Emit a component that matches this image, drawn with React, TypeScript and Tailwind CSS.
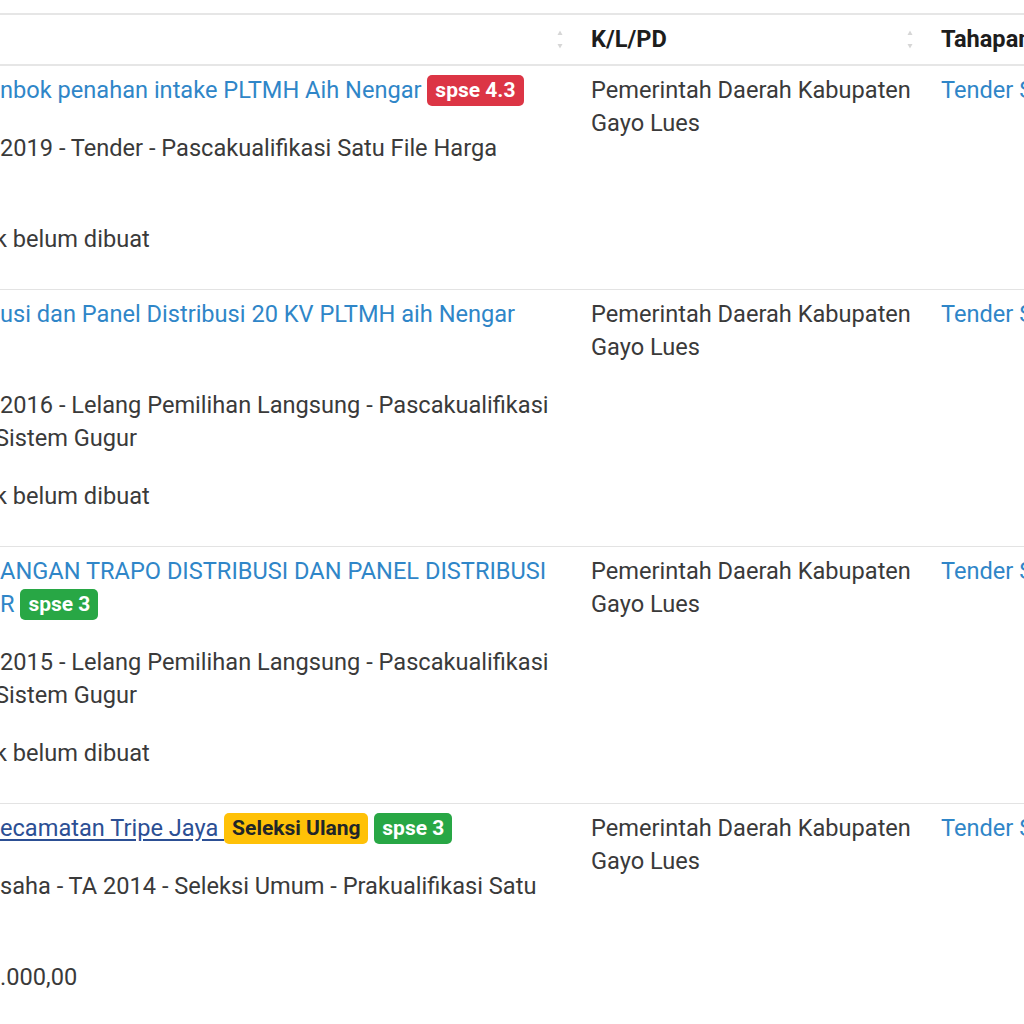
const rows = [
  {
    title: [["nbok penahan intake PLTMH Aih Nengar", [{ text: "spse 4.3", tone: "red" }]]],
    details: ["2019 - Tender - Pascakualifikasi Satu File Harga", ""],
    value: "k belum dibuat",
  },
  {
    title: [["usi dan Panel Distribusi 20 KV PLTMH aih Nengar", []], ["", []]],
    details: ["2016 - Lelang Pemilihan Langsung - Pascakualifikasi", "Sistem Gugur"],
    value: "k belum dibuat",
  },
  {
    title: [
      ["ANGAN TRAPO DISTRIBUSI DAN PANEL DISTRIBUSI", []],
      ["R", [{ text: "spse 3", tone: "green" }]],
    ],
    details: ["2015 - Lelang Pemilihan Langsung - Pascakualifikasi", "Sistem Gugur"],
    value: "k belum dibuat",
  },
  {
    title: [
      [
        "ecamatan Tripe Jaya ",
        [
          { text: "Seleksi Ulang", tone: "yellow" },
          { text: "spse 3", tone: "green" },
        ],
      ],
    ],
    details: ["saha - TA 2014 - Seleksi Umum - Prakualifikasi Satu", ""],
    value: ".000,00",
    visited: true,
  },
] as const;

const badgeTone: Record<string, string> = {
  red: "bg-[#dc3545] text-white",
  green: "bg-[#28a745] text-white",
  yellow: "bg-[#ffc107] text-[#212529]",
};

function SortIcon() {
  return (
    <span className="flex flex-col items-center gap-[7px]">
      <svg width="6" height="6" viewBox="0 0 6 6">
        <path d="M3 0.5 L5.5 5 L0.5 5 Z" fill="#d6d6d6" />
      </svg>
      <svg width="6" height="6" viewBox="0 0 6 6">
        <path d="M0.5 1 L5.5 1 L3 5.5 Z" fill="#d6d6d6" />
      </svg>
    </span>
  );
}

function Badge({ text, tone }: { text: string; tone: string }) {
  return (
    <span
      className={`inline-block rounded-[5px] px-[8px] py-[5px] align-[1px] text-[21px] leading-[21px] font-bold ${badgeTone[tone]}`}
    >
      {text}
    </span>
  );
}

function Cut({ text }: { text: string }) {
  // lines whose first letter is sliced by the left edge of the screenshot
  const cut = text.startsWith("k ") || text.startsWith("Sistem");
  return (
    <div className={`whitespace-nowrap h-[33px] ${cut ? "-ml-[5px]" : ""}`}>{text}</div>
  );
}

export default function App() {
  return (
    <div className="w-[1024px] h-[1024px] overflow-hidden bg-white font-['Roboto','Noto_Sans',sans-serif] text-[23.6px] leading-[33px] text-[#3a3a3a]">
      <div className="h-[13px]" />
      <div className="w-[1200px]">
        <div className="flex border-y-2 border-[#e6e6e6] font-bold text-[#1d1d1d]">
          <div className="w-[579px] flex items-center justify-end py-[8px] pr-[16px]">
            <SortIcon />
          </div>
          <div className="w-[350px] flex items-center justify-between py-[8px] pl-[12px] pr-[16px]">
            <span>K/L/PD</span>
            <SortIcon />
          </div>
          <div className="flex-1 py-[8px] pl-[12px] whitespace-nowrap">Tahapan Paket Saat Ini</div>
        </div>

        {rows.map((row, i) => (
          <div key={i} className="flex border-b border-[#e3e3e3]">
            <div className="w-[579px] py-[8px] pr-[12px]">
              <div className="mb-[25px]">
                {row.title.map(([line, badges], j) => (
                  <div key={j} className="whitespace-nowrap h-[33px]">
                    {line && (
                      <span
                        className={
                          "visited" in row
                            ? "text-[#2c4f94] underline underline-offset-[3px]"
                            : "text-[#2f86c8]"
                        }
                      >
                        {line}
                      </span>
                    )}
                    {badges.map((b, k) => (
                      <span key={k}>
                        {" "}
                        <Badge text={b.text} tone={b.tone} />
                      </span>
                    ))}
                  </div>
                ))}
              </div>
              <div className="mb-[25px]">
                {row.details.map((d, j) => (
                  <Cut key={j} text={d} />
                ))}
              </div>
              <div className="mb-[25px]">
                <Cut text={row.value} />
              </div>
            </div>
            <div className="w-[350px] pt-[8px] pl-[12px]">
              <div>Pemerintah Daerah Kabupaten</div>
              <div>Gayo Lues</div>
            </div>
            <div className="flex-1 pt-[8px] pl-[12px] whitespace-nowrap text-[#2f86c8]">
              Tender Sudah Selesai
            </div>
          </div>
        ))}
      </div>
    </div>
  );
}
